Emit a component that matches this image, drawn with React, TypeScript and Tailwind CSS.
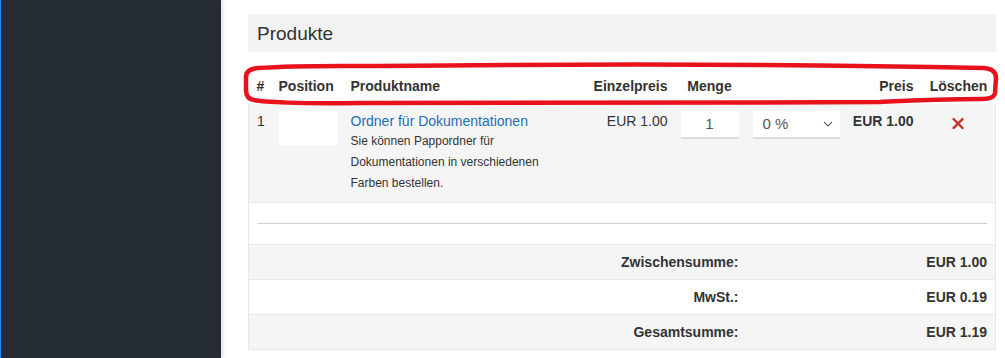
import React from "react";

function DeleteIcon() {
  return (
    <svg width="14" height="13" viewBox="0 0 14 13" className="inline-block">
      <path d="M2.5 2 L11.5 11" stroke="#6b1a17" strokeWidth="1" opacity="0.3" transform="translate(0.8,0.9)" />
      <path d="M11.5 2 L2.5 11" stroke="#6b1a17" strokeWidth="1" opacity="0.3" transform="translate(0.8,0.9)" />
      <path d="M2.5 2 L11.5 11" stroke="#c8302b" strokeWidth="2.4" strokeLinecap="round" />
      <path d="M11.5 2 L2.5 11" stroke="#c8302b" strokeWidth="2.4" strokeLinecap="round" />
    </svg>
  );
}

function Chevron() {
  return (
    <svg width="10" height="6" viewBox="0 0 10 6">
      <path d="M1 1 L5 5 L9 1" fill="none" stroke="#666" strokeWidth="1.2" />
    </svg>
  );
}

export default function App() {
  const font = { fontFamily: '"Liberation Sans", Arial, Helvetica, sans-serif' };
  return (
    <div className="flex w-[1005px] h-[358px] bg-white text-[#333] overflow-hidden" style={font}>
      <aside className="w-[221px] shrink-0 bg-[#252b33] border-l border-[#1e8fff] shadow-[2px_0_4px_rgba(0,0,0,0.12)] z-10" />
      <main className="relative flex-1 pl-[27px] pr-[10px] pt-[14px]">
        <div className="h-[38px] bg-[#f2f2f2] flex items-center pl-[9px]">
          <h2 className="text-[19px] leading-none">Produkte</h2>
        </div>
        <table className="mt-[16px] w-[747px] table-fixed border-collapse text-[14px] leading-[20px]">
          <colgroup>
            <col className="w-[22px]" />
            <col className="w-[72px]" />
            <col className="w-[236px]" />
            <col className="w-[97px]" />
            <col className="w-[71px]" />
            <col className="w-[101px]" />
            <col className="w-[74px]" />
            <col className="w-[74px]" />
          </colgroup>
          <thead>
            <tr className="h-[36px] font-bold">
              <th className="pl-[8px] text-left">#</th>
              <th className="pl-[8px] text-left">Position</th>
              <th className="pl-[8px] text-left">Produktname</th>
              <th className="pr-[8px] text-right">Einzelpreis</th>
              <th className="text-center pl-[5px] pr-[8px]">Menge</th>
              <th />
              <th className="pr-[8px] text-right">Preis</th>
              <th className="text-center">Löschen</th>
            </tr>
          </thead>
          <tbody>
            <tr className="bg-[#f5f5f5] align-top">
              <td className="pl-[8px] pt-[7px] border-l border-[#e8e8e8]">1</td>
              <td className="pl-[8px] pt-[7px]">
                <div className="w-[59px] h-[34px] bg-white" />
              </td>
              <td className="pl-[8px] pt-[7px] pb-[8px]">
                <a className="text-[#1f6eb1]">Ordner für Dokumentationen</a>
                <p className="w-[200px] text-[12px] leading-[21px]">
                  Sie können Pappordner für Dokumentationen in verschiedenen Farben bestellen.
                </p>
              </td>
              <td className="pr-[8px] pt-[7px] text-right">EUR 1.00</td>
              <td className="pl-[5px] pt-[7px]">
                <div className="w-[58px] h-[26px] bg-white shadow-[0_2px_0_#dcdcdc] flex items-center justify-center text-[15px] text-[#555]">
                  1
                </div>
              </td>
              <td className="pl-[6px] pt-[7px]">
                <div className="w-[87px] h-[26px] bg-white shadow-[0_2px_0_#dcdcdc] flex items-center justify-between pl-[10px] pr-[7px] text-[15px] text-[#555]">
                  <span>0 %</span>
                  <Chevron />
                </div>
              </td>
              <td className="pr-[8px] pt-[7px] text-right font-bold">EUR 1.00</td>
              <td className="pt-[8px] text-center border-r border-[#e8e8e8]">
                <DeleteIcon />
              </td>
            </tr>
            <tr className="border-t border-[#e8e8e8]">
              <td colSpan={8} className="h-[42px] px-[8px] border-x border-[#e8e8e8]">
                <div className="border-t border-[#cfcfcf]" />
              </td>
            </tr>
            <tr className="h-[35px] bg-[#f5f5f5] border-t border-[#e8e8e8] font-bold">
              <td colSpan={5} className="pr-[8px] text-right border-l border-[#e8e8e8]">Zwischensumme:</td>
              <td colSpan={3} className="pr-[8px] text-right border-r border-[#e8e8e8]">EUR 1.00</td>
            </tr>
            <tr className="h-[35px] border-t border-[#e8e8e8] font-bold">
              <td colSpan={5} className="pr-[8px] text-right border-l border-[#e8e8e8]">MwSt.:</td>
              <td colSpan={3} className="pr-[8px] text-right border-r border-[#e8e8e8]">EUR 0.19</td>
            </tr>
            <tr className="h-[35px] bg-[#f5f5f5] border-y border-[#e8e8e8] font-bold">
              <td colSpan={5} className="pr-[8px] text-right border-l border-[#e8e8e8]">Gesamtsumme:</td>
              <td colSpan={3} className="pr-[8px] text-right border-r border-[#e8e8e8]">EUR 1.19</td>
            </tr>
          </tbody>
        </table>
        <svg className="absolute left-0 top-0 pointer-events-none" width="784" height="120" viewBox="221 0 784 120">
          <path
            d="M 258 68 C 300 65, 340 66, 380 66 C 560 64, 800 64, 984 68 Q 996 69 996 78 L 995 93 Q 994 99 982 99 C 930 99, 900 101, 880 102 C 700 103, 500 103, 360 103 C 300 104, 262 102, 254 100 Q 246 99 246 90 L 246 77 Q 246 69 258 68 Z"
            fill="none"
            stroke="#e8121c"
            strokeWidth="4.5"
          />
        </svg>
      </main>
    </div>
  );
}
